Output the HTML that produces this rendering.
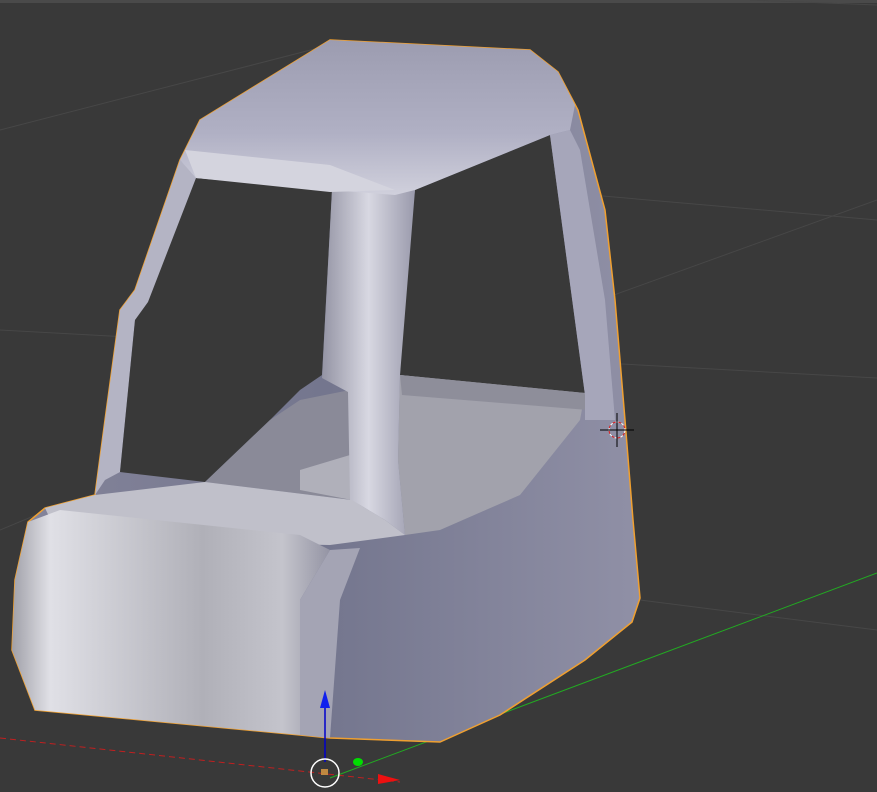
<!DOCTYPE html><html><head><style>html,body{margin:0;padding:0;background:#393939;overflow:hidden}svg{display:block}</style></head><body>
<svg width="877" height="792" viewBox="0 0 877 792" xmlns="http://www.w3.org/2000/svg">
<defs>
<linearGradient id="front" x1="0" y1="0" x2="1" y2="0"><stop offset="0" stop-color="#a0a0a8"/><stop offset="0.12" stop-color="#e0e0e6"/><stop offset="0.6" stop-color="#b0b0b8"/><stop offset="0.85" stop-color="#c4c4cc"/><stop offset="1" stop-color="#9494a4"/></linearGradient>
<linearGradient id="side" x1="0" y1="0" x2="1" y2="0"><stop offset="0" stop-color="#84849a"/><stop offset="0.5" stop-color="#74768e"/><stop offset="1" stop-color="#9090a6"/></linearGradient>
<linearGradient id="roof" x1="0" y1="0" x2="0" y2="1"><stop offset="0" stop-color="#9c9cb0"/><stop offset="0.6" stop-color="#b0b0c4"/><stop offset="1" stop-color="#d0d0dc"/></linearGradient>
<linearGradient id="pil" x1="0" y1="0" x2="1" y2="0"><stop offset="0" stop-color="#9494a4"/><stop offset="0.5" stop-color="#d8d8e2"/><stop offset="1" stop-color="#9a9aac"/></linearGradient>
</defs>
<rect width="877" height="792" fill="#393939"/>
<rect width="877" height="3" fill="#4a4a4a"/>
<g stroke="#474747" stroke-width="1" fill="none">
<line x1="0" y1="130" x2="330" y2="45"/>
<line x1="0" y1="330" x2="877" y2="378"/>
<line x1="420" y1="180" x2="877" y2="220"/>
<line x1="0" y1="530" x2="60" y2="505"/>
<line x1="600" y1="300" x2="877" y2="200"/>
<line x1="640" y1="600" x2="877" y2="630"/>
<line x1="750" y1="0" x2="877" y2="5"/>
</g>
<line x1="0" y1="738" x2="400" y2="782" stroke="#c02020" stroke-width="1" stroke-dasharray="6,4"/>
<line x1="330" y1="778" x2="877" y2="573" stroke="#22aa22" stroke-width="1"/>
<path d="M330,40 L530,50 L558,72 L578,110 L605,210 L615,300 L625,420 L633,520 L640,598 L632,622 L585,660 L500,715 L440,742 L330,738 L300,735 L35,710 L12,650 L15,580 L28,522 L45,508 L95,495 L105,420 L120,310 L135,290 L180,160 L200,120 Z" fill="url(#side)" stroke="#f0a030" stroke-width="1.5"/>
<path d="M180,160 L200,180 L150,305 L135,320 L120,472 L105,480 L95,495 L105,420 L120,310 L135,290 Z" fill="#b4b4c4"/>
<path d="M196,178 L332,190 L322,375 L300,390 L270,420 L205,482 L120,472 L135,320 L148,302 Z" fill="#393939"/>
<path d="M415,190 L550,135 L585,395 L400,375 L405,270 Z" fill="#393939"/>
<path d="M400,375 L585,393 L580,420 L520,495 L440,530 L405,535 L398,460 Z" fill="#a2a2ac"/>
<path d="M400,375 L585,393 L588,410 L402,395 Z" fill="#8e8e9a"/>
<path d="M205,482 L270,420 L300,400 L350,390 L352,500 Z" fill="#8a8a98"/>
<path d="M300,470 L350,455 L352,500 L300,490 Z" fill="#b0b0ba"/>
<path d="M550,135 L570,130 L580,150 L605,300 L615,420 L585,420 L585,395 Z" fill="#a6a6ba"/>
<path d="M332,190 L415,190 L400,375 L398,460 L405,535 L385,520 L360,505 L350,500 L348,392 L322,378 Z" fill="url(#pil)"/>
<path d="M180,160 L200,120 L330,40 L530,50 L558,72 L575,105 L570,130 L550,135 L415,190 L395,195 L330,190 L196,178 Z" fill="url(#roof)"/>
<path d="M185,150 L330,165 L395,190 L330,192 L196,178 Z" fill="#d4d4de"/>
<path d="M45,508 L95,495 L205,482 L352,500 L385,520 L405,535 L330,545 L60,540 Z" fill="#c0c0ca"/>
<path d="M28,522 L60,510 L300,535 L330,550 L300,600 L300,735 L35,710 L12,650 L15,580 Z" fill="url(#front)"/>
<path d="M300,735 L300,600 L330,550 L360,548 L340,600 L330,738 Z" fill="#a4a4b4"/>
<line x1="325" y1="700" x2="325" y2="762" stroke="#0000cc" stroke-width="1.5"/>
<path d="M325,690 L330,708 L320,708 Z" fill="#1020ee"/>
<circle cx="325" cy="773" r="14" fill="none" stroke="#fff" stroke-width="1.5"/>
<rect x="321" y="769" width="7" height="6" fill="#c08840"/>
<ellipse cx="358" cy="762" rx="5" ry="4" fill="#00dd00"/>
<path d="M378,774 L400,780 L378,784 Z" fill="#ee1010"/>
<circle cx="617" cy="430" r="8" fill="none" stroke="#fff" stroke-dasharray="3,3"/>
<circle cx="617" cy="430" r="8" fill="none" stroke="#e02020" stroke-dasharray="3,3" stroke-dashoffset="3"/>
<line x1="600" y1="430" x2="634" y2="430" stroke="#000"/>
<line x1="617" y1="413" x2="617" y2="447" stroke="#000"/>
</svg>
</body></html>
